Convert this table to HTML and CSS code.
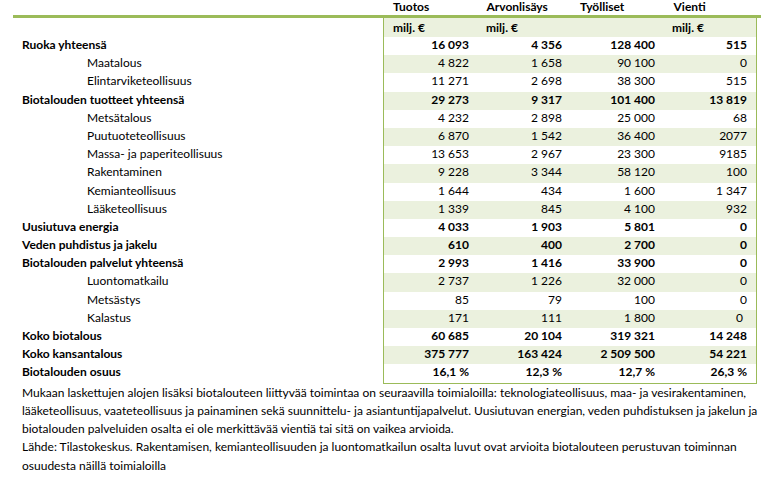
FILE: index.html
```html
<!DOCTYPE html>
<html lang="fi">
<head>
<meta charset="utf-8">
<title>Biotalous</title>
<link rel="stylesheet" href="styles.css">
</head>
<body>
<div class="sheet">
  <div class="top">
    <div class="top-spacer"></div>
    <div class="th">Tuotos</div>
    <div class="th">Arvonlisäys</div>
    <div class="th">Työlliset</div>
    <div class="th">Vienti</div>
  </div>
  <div class="rule"></div>
  <div class="grid">
    <div class="labels">
      <div class="lh"></div>
      <div class="lr b">Ruoka yhteensä</div>
      <div class="lr i">Maatalous</div>
      <div class="lr i">Elintarviketeollisuus</div>
      <div class="lr b">Biotalouden tuotteet yhteensä</div>
      <div class="lr i">Metsätalous</div>
      <div class="lr i">Puutuoteteollisuus</div>
      <div class="lr i">Massa- ja paperiteollisuus</div>
      <div class="lr i">Rakentaminen</div>
      <div class="lr i">Kemianteollisuus</div>
      <div class="lr i">Lääketeollisuus</div>
      <div class="lr b">Uusiutuva energia</div>
      <div class="lr b">Veden puhdistus ja jakelu</div>
      <div class="lr b">Biotalouden palvelut yhteensä</div>
      <div class="lr i">Luontomatkailu</div>
      <div class="lr i">Metsästys</div>
      <div class="lr i">Kalastus</div>
      <div class="lr b">Koko biotalous</div>
      <div class="lr b">Koko kansantalous</div>
      <div class="lr b">Biotalouden osuus</div>
    </div>
    <div class="box">
      <div class="hr band"><span>milj. €</span><span>milj. €</span><span></span><span>milj. €</span></div>
      <div class="r b"><span>16&nbsp;093</span><span>4&nbsp;356</span><span>128&nbsp;400</span><span>515</span></div>
      <div class="r band"><span>4&nbsp;822</span><span>1&nbsp;658</span><span>90&nbsp;100</span><span>0</span></div>
      <div class="r"><span>11&nbsp;271</span><span>2&nbsp;698</span><span>38&nbsp;300</span><span>515</span></div>
      <div class="r b band"><span>29&nbsp;273</span><span>9&nbsp;317</span><span>101&nbsp;400</span><span>13&nbsp;819</span></div>
      <div class="r"><span>4&nbsp;232</span><span>2&nbsp;898</span><span>25&nbsp;000</span><span>68</span></div>
      <div class="r band"><span>6&nbsp;870</span><span>1&nbsp;542</span><span>36&nbsp;400</span><span>2077</span></div>
      <div class="r"><span>13&nbsp;653</span><span>2&nbsp;967</span><span>23&nbsp;300</span><span>9185</span></div>
      <div class="r band"><span>9&nbsp;228</span><span>3&nbsp;344</span><span>58&nbsp;120</span><span>100</span></div>
      <div class="r"><span>1&nbsp;644</span><span>434</span><span>1&nbsp;600</span><span>1&nbsp;347</span></div>
      <div class="r band"><span>1&nbsp;339</span><span>845</span><span>4&nbsp;100</span><span>932</span></div>
      <div class="r b"><span>4&nbsp;033</span><span>1&nbsp;903</span><span>5&nbsp;801</span><span>0</span></div>
      <div class="r b band"><span>610</span><span>400</span><span>2&nbsp;700</span><span>0</span></div>
      <div class="r b"><span>2&nbsp;993</span><span>1&nbsp;416</span><span>33&nbsp;900</span><span>0</span></div>
      <div class="r band"><span>2&nbsp;737</span><span>1&nbsp;226</span><span>32&nbsp;000</span><span>0</span></div>
      <div class="r"><span>85</span><span>79</span><span>100</span><span>0</span></div>
      <div class="r band"><span>171</span><span>111</span><span>1&nbsp;800</span><span class="nudge">0</span></div>
      <div class="r b"><span>60&nbsp;685</span><span>20&nbsp;104</span><span>319&nbsp;321</span><span>14&nbsp;248</span></div>
      <div class="r b band"><span>375&nbsp;777</span><span>163&nbsp;424</span><span>2&nbsp;509&nbsp;500</span><span>54&nbsp;221</span></div>
      <div class="r b"><span>16,1&nbsp;%</span><span>12,3&nbsp;%</span><span>12,7&nbsp;%</span><span>26,3&nbsp;%</span></div>
    </div>
  </div>
  <p class="note">Mukaan laskettujen alojen lisäksi biotalouteen liittyvää toimintaa on seuraavilla toimialoilla: teknologiateollisuus, maa- ja vesirakentaminen,<br>lääketeollisuus, vaateteollisuus ja painaminen sekä suunnittelu- ja asiantuntijapalvelut. Uusiutuvan energian, veden puhdistuksen ja jakelun ja<br>biotalouden palveluiden osalta ei ole merkittävää vientiä tai sitä on vaikea arvioida.<br>Lähde: Tilastokeskus. Rakentamisen, kemianteollisuuden ja luontomatkailun osalta luvut ovat arvioita biotalouteen perustuvan toiminnan<br>osuudesta näillä toimialoilla</p>
</div>
</body>
</html>
```

FILE: styles.css
```css
html, body {
  margin: 0;
  padding: 0;
  background: #ffffff;
}

.sheet {
  font-family: Lato, "Liberation Sans", sans-serif;
  font-size: 12px;
  color: #000000;
  width: 783px;
}

.top {
  display: grid;
  grid-template-columns: 383px repeat(4, 93.5px);
  height: 15px;
  line-height: 14.4px;
  font-weight: bold;
}

.th {
  padding-left: 10px;
}

.rule {
  margin-left: 13px;
  width: 748px;
  height: 3px;
  background: #9bbb59;
}

.grid {
  display: flex;
}

.labels {
  width: 383px;
}

.lh {
  height: 19px;
}

.lr {
  height: 18.2px;
  line-height: 16px;
  white-space: nowrap;
}

.lr.b {
  font-weight: bold;
  padding-left: 22px;
}

.lr.i {
  padding-left: 87px;
}

.box {
  width: 372px;
  border-left: 1px solid #9bbb59;
  border-right: 1px solid #9bbb59;
  border-bottom: 1px solid #9bbb59;
}

.hr {
  display: grid;
  grid-template-columns: repeat(4, 93px);
  height: 19px;
  line-height: 19px;
  font-weight: bold;
}

.hr span {
  padding-left: 9px;
}

.r {
  display: grid;
  grid-template-columns: repeat(4, 93px);
  height: 18.2px;
  line-height: 16px;
  white-space: nowrap;
}

.r span {
  text-align: right;
  padding-right: 8px;
}

.r span:last-child {
  padding-right: 9px;
}

.r span.nudge {
  padding-right: 13px;
}

.r.b {
  font-weight: bold;
}

.band {
  background: #ebf1de;
}

.note {
  margin: 0;
  padding-left: 22px;
  line-height: 18.25px;
  white-space: nowrap;
}
```
